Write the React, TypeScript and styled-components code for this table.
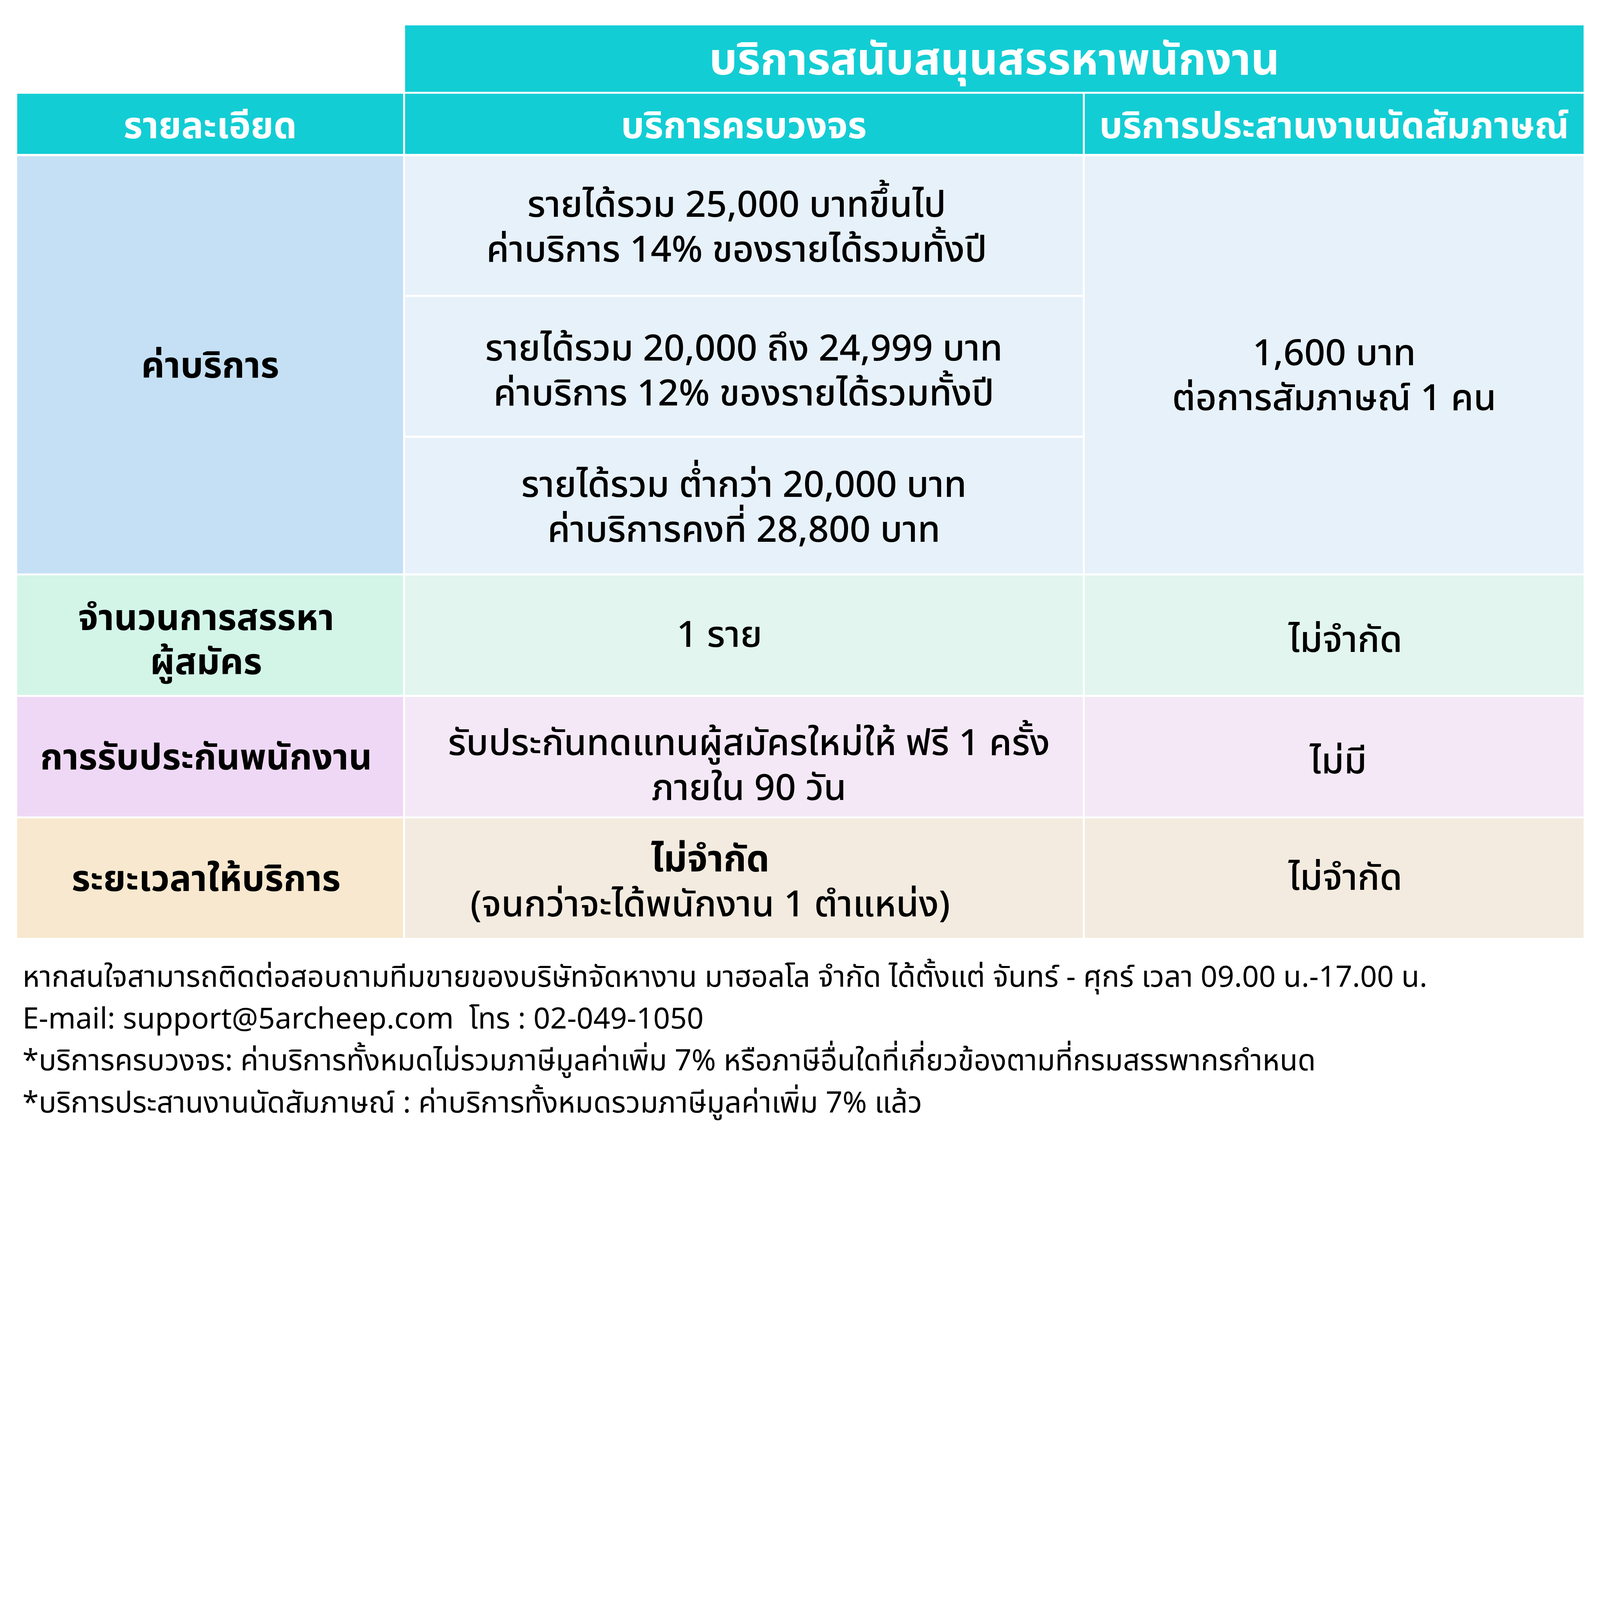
import { Fragment } from "react";
import styled, { createGlobalStyle } from "styled-components";

// the reference was drawn on a 1568 unit wide canvas; scale it to the viewport width
const u = (n: number) => `${((n * 100) / 1568).toFixed(4)}vw`;

const GlobalStyle = createGlobalStyle`
  html, body {
    margin: 0;
    padding: 0;
    background: #ffffff;
    overflow: hidden;
  }
  body {
    font-family: "Noto Sans Thai", "Noto Sans", sans-serif;
    color: #000000;
  }
`;

const Page = styled.main`
  width: ${u(1568)};
  height: ${u(1119)};
  padding: ${u(25)} 0 0 ${u(17)};
  box-sizing: border-box;
  overflow: hidden;
`;

const Table = styled.section`
  display: grid;
  grid-template-columns: ${u(378)} ${u(664)} ${u(489)};
  grid-template-rows: ${u(65)} ${u(59)} ${u(136)} ${u(136)} ${u(133)} ${u(117)} ${u(117)} ${u(117)};
  gap: ${u(2)};
`;

const tones = {
  fee: { label: "#c5e0f4", cell: "#e7f1fa" },
  count: { label: "#d2f5e8", cell: "#e2f5ee" },
  warranty: { label: "#efd8f5", cell: "#f4e8f6" },
  period: { label: "#f8e8cf", cell: "#f3ebdf" },
};
type Tone = keyof typeof tones;

// $shift moves the text down, $dx moves it sideways (both in canvas units)
const Cell = styled.div<{ $bg: string; $col?: string; $row?: string; $shift?: number; $dx?: number }>`
  display: flex;
  flex-flow: column;
  align-items: center;
  justify-content: center;
  text-align: center;
  white-space: nowrap;
  background: ${(p) => p.$bg};
  grid-column: ${(p) => p.$col ?? "auto"};
  grid-row: ${(p) => p.$row ?? "auto"};
  padding-top: ${(p) => u(p.$shift ?? 0)};
  padding-left: ${(p) => u(Math.max(0, 2 * (p.$dx ?? 0)))};
  padding-right: ${(p) => u(Math.max(0, -2 * (p.$dx ?? 0)))};
`;

const Title = styled(Cell)`
  color: #ffffff;
  font-weight: 700;
  font-size: ${u(43.5)};
  line-height: 1;
`;

const Head = styled(Cell)`
  color: #ffffff;
  font-weight: 700;
  font-size: ${u(36)};
  line-height: 1;
`;

const Label = styled(Cell)`
  font-weight: 700;
  font-size: ${u(35.5)};
  line-height: ${u(43)};
`;

const Value = styled(Cell)`
  font-weight: 500;
  font-size: ${u(35.8)};
  line-height: ${u(44)};
`;

const Strong = styled.span`
  font-weight: 700;
`;

const Footer = styled.footer`
  margin-top: ${u(19)};
  padding-left: ${u(5)};
  font-size: ${u(28.8)};
  line-height: ${u(41)};

  p {
    margin: 0;
    white-space: nowrap;
  }
`;

const TEAL = "#13cdd4";

function Lines({ text, strong }: { text: string[]; strong?: boolean }) {
  return (
    <>
      {text.map((t, i) =>
        strong && i === 0 ? <Strong key={t}>{t}</Strong> : <span key={t}>{t}</span>
      )}
    </>
  );
}

const rows: {
  tone: Tone;
  label: string[];
  full: string[];
  interview: string[];
  nudge: [number, number, number];
  dx: [number, number];
  strong?: boolean;
}[] = [
  {
    tone: "count",
    label: ["จำนวนการสรรหา", "ผู้สมัคร"],
    full: ["1 ราย"],
    interview: ["ไม่จำกัด"],
    nudge: [12, 2, 12],
    dx: [-24, 11],
  },
  {
    tone: "warranty",
    label: ["การรับประกันพนักงาน"],
    full: ["รับประกันทดแทนผู้สมัครใหม่ให้ ฟรี 1 ครั้ง", "ภายใน 90 วัน"],
    interview: ["ไม่มี"],
    nudge: [4, 20, 12],
    dx: [5, 4],
  },
  {
    tone: "period",
    label: ["ระยะเวลาให้บริการ"],
    full: ["ไม่จำกัด", "(จนกว่าจะได้พนักงาน 1 ตำแหน่ง)"],
    interview: ["ไม่จำกัด"],
    nudge: [4, 10, 2],
    dx: [-33, 11],
    strong: true,
  },
];

const tiers = [
  { text: ["รายได้รวม 25,000 บาทขึ้นไป", "ค่าบริการ 14% ของรายได้รวมทั้งปี"], nudge: 6, dx: -7 },
  { text: ["รายได้รวม 20,000 ถึง 24,999 บาท", "ค่าบริการ 12% ของรายได้รวมทั้งปี"], nudge: 12, dx: 0 },
  { text: ["รายได้รวม ต่ำกว่า 20,000 บาท", "ค่าบริการคงที่ 28,800 บาท"], nudge: 6, dx: 0 },
];

export default function App() {
  return (
    <>
      <GlobalStyle />
      <Page>
        <Table>
          <Title $bg={TEAL} $col="2 / 4" $shift={5}>บริการสนับสนุนสรรหาพนักงาน</Title>

          <Head $bg={TEAL} $col="1" $row="2" $shift={6}>รายละเอียด</Head>
          <Head $bg={TEAL} $shift={6}>บริการครบวงจร</Head>
          <Head $bg={TEAL} $shift={6}>บริการประสานงานนัดสัมภาษณ์</Head>

          <Label $bg={tones.fee.label} $col="1" $row="3 / 6" $shift={4}>ค่าบริการ</Label>
          {tiers.map((t, i) => (
            <Value key={i} $bg={tones.fee.cell} $col="2" $row={`${3 + i}`} $shift={t.nudge} $dx={t.dx}>
              <Lines text={t.text} />
            </Value>
          ))}
          <Value $bg={tones.fee.cell} $col="3" $row="3 / 6" $shift={24}>
            <Lines text={["1,600 บาท", "ต่อการสัมภาษณ์ 1 คน"]} />
          </Value>

          {rows.map((r, i) => (
            <Fragment key={r.tone}>
              <Label $bg={tones[r.tone].label} $col="1" $row={`${6 + i}`} $shift={r.nudge[0]} $dx={-4}>
                <Lines text={r.label} />
              </Label>
              <Value $bg={tones[r.tone].cell} $col="2" $row={`${6 + i}`} $shift={r.nudge[1]} $dx={r.dx[0]}>
                <Lines text={r.full} strong={r.strong} />
              </Value>
              <Value $bg={tones[r.tone].cell} $col="3" $row={`${6 + i}`} $shift={r.nudge[2]} $dx={r.dx[1]}>
                <Lines text={r.interview} />
              </Value>
            </Fragment>
          ))}
        </Table>

        <Footer>
          <p>หากสนใจสามารถติดต่อสอบถามทีมขายของบริษัทจัดหางาน มาฮอลโล จำกัด ได้ตั้งแต่ จันทร์ - ศุกร์ เวลา 09.00 น.-17.00 น.</p>
          <p>E-mail: support@5archeep.com&nbsp; โทร : 02-049-1050</p>
          <p>*บริการครบวงจร: ค่าบริการทั้งหมดไม่รวมภาษีมูลค่าเพิ่ม 7% หรือภาษีอื่นใดที่เกี่ยวข้องตามที่กรมสรรพากรกำหนด</p>
          <p>*บริการประสานงานนัดสัมภาษณ์ : ค่าบริการทั้งหมดรวมภาษีมูลค่าเพิ่ม 7% แล้ว</p>
        </Footer>
      </Page>
    </>
  );
}
